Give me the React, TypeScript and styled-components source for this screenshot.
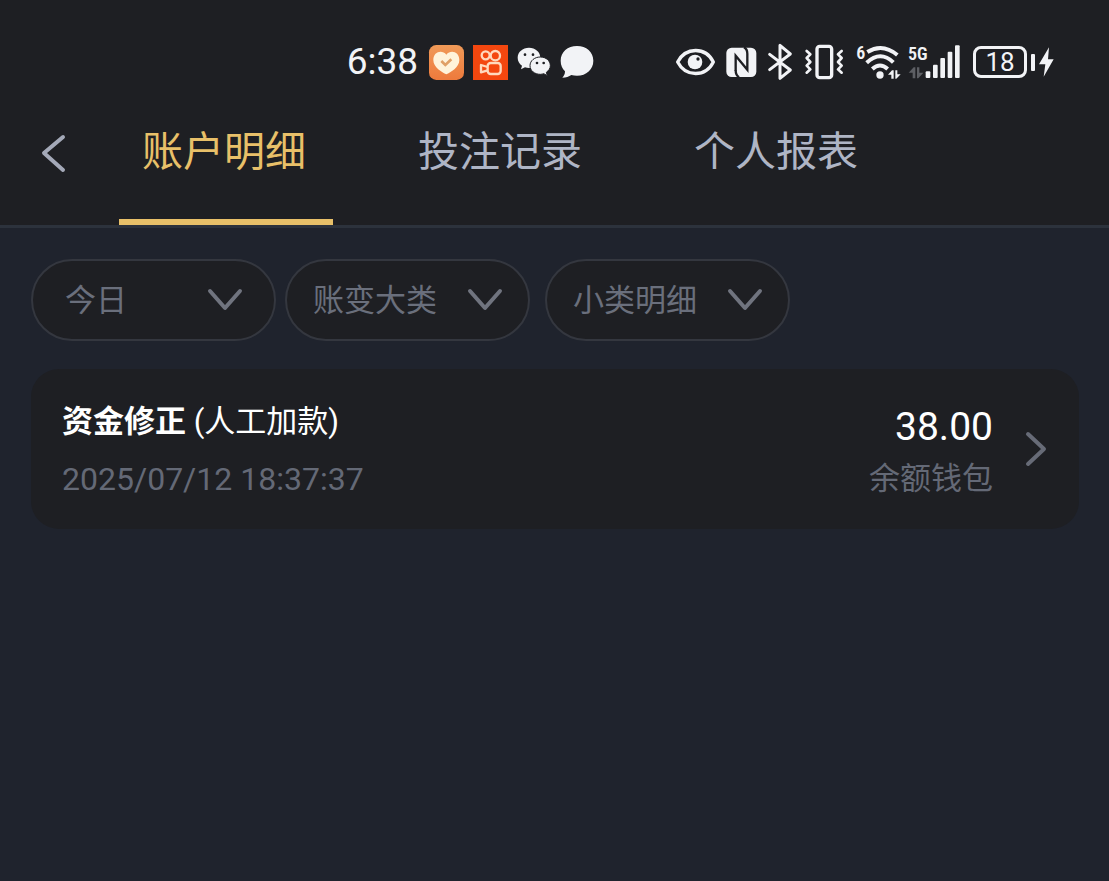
import React from "react";
import styled, { createGlobalStyle } from "styled-components";

const GlobalStyle = createGlobalStyle`
  * { box-sizing: border-box; }
  body {
    margin: 0;
    background: #1f232d;
    color: #ffffff;
    font-family: Roboto, "Noto Sans CJK SC", sans-serif;
  }
  button, select { font: inherit; color: inherit; }
`;

const Page = styled.div`
  min-height: 100vh;
  background: #1f232d;
`;

const Header = styled.header`
  background: #1e1f23;
  border-bottom: 3px solid #2c323c;
`;

const StatusBar = styled.div`
  display: flex;
  justify-content: flex-end;
  align-items: center;
  gap: 82px;
  height: 124px;
  padding: 0 55px 0 16px;
  color: #f2f3f6;
`;

const StatusGroup = styled.div<{ $gap: number }>`
  display: flex;
  align-items: center;
  gap: ${(p) => p.$gap}px;
`;

const Clock = styled.time`
  font-size: 37px;
  line-height: 40px;
  margin-right: 2px;
`;

const Icon = styled.svg`
  display: block;
  flex: none;
  overflow: visible;
`;

const Battery = styled.span`
  display: flex;
  align-items: center;
  gap: 4px;
  margin-left: 2px;
`;

const BatteryCell = styled.span`
  display: flex;
  align-items: center;
  justify-content: center;
  width: 54px;
  height: 32px;
  border: 3px solid #f2f3f6;
  border-radius: 8px;
  font-size: 26px;
  line-height: 26px;
`;

const BatteryCap = styled.span`
  width: 4px;
  height: 17px;
  border-radius: 1px;
  background: #f2f3f6;
`;

const NavRow = styled.nav`
  display: flex;
  height: 101px;
`;

const BackButton = styled.button`
  display: flex;
  align-items: flex-start;
  width: 119px;
  padding: 9px 0 0 40px;
  border: 0;
  background: none;
  cursor: pointer;
`;

const TabList = styled.div`
  display: flex;
  gap: 62px;
`;

const Tab = styled.button<{ $active?: boolean }>`
  width: 214px;
  padding: 0 4px 39px 0;
  border: 0;
  border-bottom: 6px solid ${(p) => (p.$active ? "#e8c069" : "transparent")};
  background: none;
  color: ${(p) => (p.$active ? "#e8c069" : "#afb5c5")};
  font-size: 41px;
  line-height: 56px;
  white-space: nowrap;
  cursor: pointer;
`;

const Content = styled.main`
  padding: 31px 30px 31px 31px;
`;

const Filters = styled.div`
  display: flex;
  gap: 9px;
`;

const CategoryFilters = styled.div`
  display: flex;
  gap: 15px;
`;

const FilterBox = styled.label<{ $inset: number }>`
  display: grid;
  align-items: center;
  width: 245px;
  height: 82px;

  & > * { grid-area: 1 / 1; }
  & > svg {
    justify-self: end;
    margin-right: ${(p) => p.$inset}px;
    pointer-events: none;
  }
`;

const FilterSelect = styled.select<{ $inset: number }>`
  appearance: none;
  width: 100%;
  height: 100%;
  padding: 0 64px 0 ${(p) => p.$inset}px;
  border: 2px solid #34373f;
  border-radius: 41px;
  background: #1e1f23;
  color: #6a6f7c;
  font-size: 31px;
  cursor: pointer;
`;

const Records = styled.ul`
  list-style: none;
  margin: 28px 0 0;
  padding: 0;
`;

const RecordCard = styled.button`
  display: flex;
  align-items: center;
  width: 100%;
  height: 160px;
  padding: 0 32px 0 31px;
  border: 0;
  border-radius: 28px;
  background: #1e1f23;
  text-align: left;
  cursor: pointer;
`;

const Column = styled.span<{ $end?: boolean }>`
  display: flex;
  flex-direction: column;
  align-items: ${(p) => (p.$end ? "flex-end" : "flex-start")};
  gap: ${(p) => (p.$end ? 6 : 11)}px;
  padding-top: ${(p) => (p.$end ? 8 : 2)}px;
  margin-right: ${(p) => (p.$end ? "32px" : "auto")};
`;

const Title = styled.span`
  font-size: 31px;
  line-height: 46px;
  strong { font-weight: 700; }
`;

const Amount = styled.span`
  font-size: 39px;
  line-height: 46px;
`;

const Muted = styled.span<{ $size: number }>`
  color: #646976;
  font-size: ${(p) => p.$size}px;
  line-height: 46px;
`;

const HeartApp = () => (
  <Icon width="35" height="35" viewBox="270 30 105 105" aria-hidden="true">
    <defs>
      <linearGradient id="heartTile" x1="0" y1="0" x2="0" y2="1">
        <stop offset="0" stopColor="#f09a58" />
        <stop offset="1" stopColor="#ee7a3c" />
      </linearGradient>
    </defs>
    <rect x="270" y="30" width="105" height="105" rx="22" fill="url(#heartTile)" />
    <path d="M322 59C309 43 283 50 283 75C283 97 309 112 322 118C335 112 361 97 361 75C361 50 335 43 322 59Z" fill="#fff3da" />
    <path d="M307 78L319 90L337 73" fill="none" stroke="#e0a066" strokeWidth="8" />
  </Icon>
);

const VideoApp = () => (
  <Icon width="35" height="35" viewBox="402 30 105 105" aria-hidden="true">
    <rect x="402" y="30" width="105" height="105" fill="#f4470f" />
    <g fill="none" stroke="#ffd9bd" strokeWidth="7">
      <circle cx="440" cy="61" r="12" />
      <circle cx="469" cy="62" r="14" />
      <rect x="446" y="84" width="39" height="33" rx="9" />
      <path d="M446 96L426 90V112L446 106" strokeLinejoin="round" />
    </g>
  </Icon>
);

const ChatApp = () => (
  <Icon width="34" height="30" viewBox="535 38 102 90" aria-hidden="true">
    <path d="M571 40C552 40 537 53 537 70C537 80 542 88 550 94L547 105L559 99C563 100 567 101 571 101C590 101 605 87 605 70C605 53 590 40 571 40Z" fill="#f2f3f6" />
    <path d="M605 68C588 68 574 79 574 94C574 109 588 120 605 120C609 120 612 119 615 118L626 124L623 114C630 109 635 102 635 94C635 79 622 68 605 68Z" fill="#f2f3f6" stroke="#1e1f23" strokeWidth="3" />
    <g fill="#1e1f23">
      <circle cx="559" cy="61" r="4" />
      <circle cx="583" cy="61" r="4" />
      <circle cx="595" cy="86" r="4" />
      <circle cx="615" cy="86" r="4" />
    </g>
  </Icon>
);

const MessageBubble = () => (
  <Icon width="34" height="34" viewBox="667 31 102 102" aria-hidden="true">
    <path d="M718 34C690 34 669 52 669 78C669 92 674 102 682 110C682 118 679 124 674 129C685 129 694 126 701 121C706 122 712 123 718 123C746 123 767 104 767 78C767 52 746 34 718 34Z" fill="#f2f3f6" />
  </Icon>
);

const EyeIcon = () => (
  <Icon width="39" height="28" viewBox="20 40 117 84" aria-hidden="true">
    <path d="M25 82C49 36 109 36 132 82C109 128 49 128 25 82Z" fill="none" stroke="#f2f3f6" strokeWidth="10" strokeLinejoin="round" />
    <circle cx="77" cy="82" r="22" fill="#f2f3f6" />
    <circle cx="86" cy="73" r="5" fill="#1e1f23" />
  </Icon>
);

const NfcIcon = () => (
  <Icon width="31" height="31" viewBox="170 36 93 93" aria-hidden="true">
    <rect x="171" y="38" width="90" height="88" rx="16" fill="#f2f3f6" />
    <g fill="none" stroke="#1e1f23" strokeWidth="7">
      <path d="M199 108V62L234 104V56Q234 42 224 37" />
      <path d="M199 106Q199 121 209 127" />
    </g>
  </Icon>
);

const BluetoothIcon = () => (
  <Icon width="25" height="36" viewBox="296 27 75 108" aria-hidden="true">
    <path d="M301 58L363 105L332 130V31L363 57L301 104" fill="none" stroke="#f2f3f6" strokeWidth="9" strokeLinejoin="round" strokeLinecap="round" />
  </Icon>
);

const VibrateIcon = () => (
  <Icon width="40" height="36" viewBox="406 27 120 108" aria-hidden="true">
    <g fill="none" stroke="#f2f3f6" strokeLinejoin="round" strokeLinecap="round">
      <rect x="445" y="34" width="44" height="94" rx="8" strokeWidth="10" />
      <path d="M414 48L425 58L414 69L425 81L414 92L425 103L414 113" strokeWidth="8" />
      <path d="M519 48L508 58L519 69L508 81L519 92L508 103L519 113" strokeWidth="8" />
    </g>
  </Icon>
);

const labelFont = "'Roboto Condensed', Roboto, sans-serif";

const WifiIcon = () => (
  <Icon width="46" height="36" viewBox="12 24 138 108" aria-hidden="true">
    <text x="16" y="69" fontSize="54" fontWeight="600" fontFamily={labelFont} fill="#f2f3f6">6</text>
    <g fill="none" stroke="#f2f3f6" strokeWidth="12">
      <path d="M49 48Q95 20 139 57" />
      <path d="M47 80Q88 42 127 79" />
      <path d="M64 99Q87 78 110 99" />
    </g>
    <circle cx="87" cy="117" r="11" fill="#f2f3f6" />
    <path d="M111 116L123 103H128V128H121V116ZM133 103H139V115H149L136 128H133Z" fill="#f2f3f6" />
  </Icon>
);

const SignalIcon = () => (
  <Icon width="52" height="36" viewBox="174 24 156 108" aria-hidden="true">
    <text x="174" y="71" fontSize="54" fontWeight="600" fontFamily={labelFont} fill="#f2f3f6">5G</text>
    <path d="M176 110L191 94H196V127H188V110ZM201 94H208V110H220L205 127H201Z" fill="#5d5f64" />
    <g fill="#f2f3f6">
      <rect x="227" y="106" width="14" height="20" rx="3" />
      <rect x="249" y="86" width="14" height="40" rx="3" />
      <rect x="271" y="66" width="14" height="60" rx="3" />
      <rect x="293" y="47" width="14" height="79" rx="3" />
      <rect x="315" y="28" width="14" height="98" rx="3" />
    </g>
  </Icon>
);

const BoltIcon = () => (
  <Icon width="15" height="30" viewBox="569 37 45 90" aria-hidden="true">
    <path d="M599 38L569 89H588L583 126L613 74H596Z" fill="#f2f3f6" />
  </Icon>
);

const Chevron = ({ d, width, height, color }: { d: string; width: number; height: number; color: string }) => (
  <Icon width={width} height={height} viewBox={`0 0 ${width} ${height}`} aria-hidden="true">
    <path d={d} fill="none" stroke={color} strokeWidth="4" strokeLinecap="round" strokeLinejoin="round" />
  </Icon>
);

const Filter = ({ label, options, inset }: { label: string; options: string[]; inset: number }) => (
  <FilterBox $inset={inset}>
    <FilterSelect aria-label={label} $inset={inset}>
      {options.map((o) => (
        <option key={o}>{o}</option>
      ))}
    </FilterSelect>
    <Chevron width={36} height={24} d="M2 3L17 20L32 3" color="#70747f" />
  </FilterBox>
);

const tabs = ["账户明细", "投注记录", "个人报表"];

export default function App() {
  const [active, setActive] = React.useState(0);
  return (
    <Page>
      <GlobalStyle />
      <Header>
        <StatusBar>
          <StatusGroup $gap={9}>
            <Clock>6:38</Clock>
            <HeartApp />
            <VideoApp />
            <ChatApp />
            <MessageBubble />
          </StatusGroup>
          <StatusGroup $gap={11}>
            <EyeIcon />
            <NfcIcon />
            <BluetoothIcon />
            <VibrateIcon />
            <StatusGroup $gap={7}>
              <WifiIcon />
              <SignalIcon />
            </StatusGroup>
            <Battery>
              <BatteryCell>18</BatteryCell>
              <BatteryCap />
              <BoltIcon />
            </Battery>
          </StatusGroup>
        </StatusBar>
        <NavRow>
          <BackButton aria-label="返回">
            <Chevron width={26} height={40} d="M23 4L4 20L23 37" color="#a4a9b8" />
          </BackButton>
          <TabList role="tablist">
            {tabs.map((t, i) => (
              <Tab key={t} role="tab" aria-selected={i === active} $active={i === active} onClick={() => setActive(i)}>
                {t}
              </Tab>
            ))}
          </TabList>
        </NavRow>
      </Header>
      <Content>
        <Filters>
          <Filter label="日期" options={["今日"]} inset={32} />
          <CategoryFilters>
            <Filter label="大类" options={["账变大类"]} inset={26} />
            <Filter label="小类" options={["小类明细"]} inset={26} />
          </CategoryFilters>
        </Filters>
        <Records>
          <li>
            <RecordCard>
              <Column>
                <Title>
                  <strong>资金修正</strong> (人工加款)
                </Title>
                <Muted as="time" $size={32}>2025/07/12 18:37:37</Muted>
              </Column>
              <Column $end>
                <Amount>38.00</Amount>
                <Muted $size={31}>余额钱包</Muted>
              </Column>
              <Chevron width={22} height={36} d="M3 3L19 18L3 33" color="#676b77" />
            </RecordCard>
          </li>
        </Records>
      </Content>
    </Page>
  );
}
